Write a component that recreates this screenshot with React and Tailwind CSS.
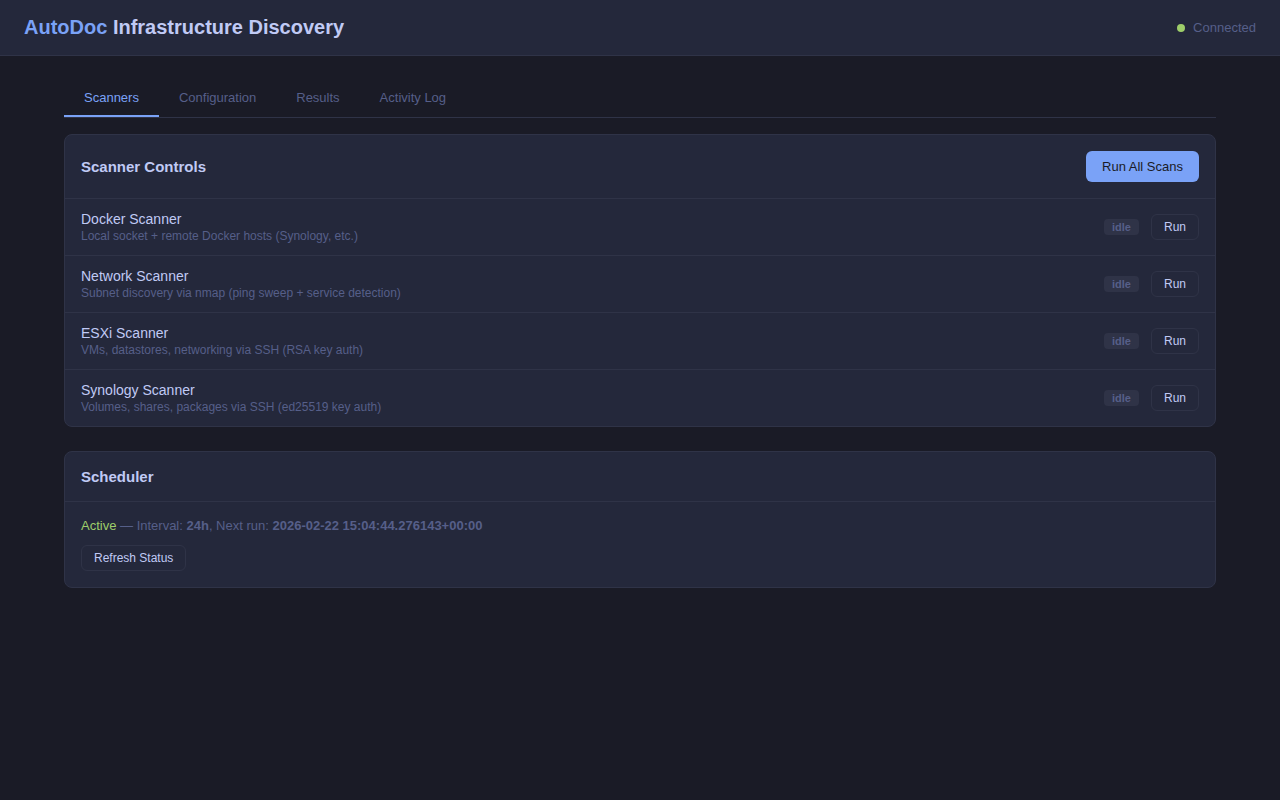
const scanners = [
  { name: 'Docker Scanner', desc: 'Local socket + remote Docker hosts (Synology, etc.)' },
  { name: 'Network Scanner', desc: 'Subnet discovery via nmap (ping sweep + service detection)' },
  { name: 'ESXi Scanner', desc: 'VMs, datastores, networking via SSH (RSA key auth)' },
  { name: 'Synology Scanner', desc: 'Volumes, shares, packages via SSH (ed25519 key auth)' },
];

const tabs = ['Scanners', 'Configuration', 'Results', 'Activity Log'];

export default function App() {
  return (
    <div className="min-h-[800px] bg-[#1a1b26] text-[#c0caf5] font-['Liberation_Sans',sans-serif] antialiased">
      <header className="h-[56px] flex items-center justify-between px-6 bg-[#24283b] border-b border-[#2f3347]">
        <h1 className="text-xl font-semibold leading-[23px]">
          <span className="text-[#7aa2f7]">AutoDoc</span> Infrastructure Discovery
        </h1>
        <div className="flex items-center gap-2 text-[13px] text-[#565f89]">
          <span className="w-2 h-2 rounded-full bg-[#9ece6a]" />
          Connected
        </div>
      </header>

      <main className="px-16 pt-6">
        <div className="flex border-b border-[#2f3347] mb-4">
          {tabs.map((tab, i) => (
            <div
              key={tab}
              className={`px-5 pt-[10px] pb-[10px] h-[37px] text-[13px] leading-[15px] border-b-2 ${i === 0 ? 'text-[#7aa2f7] border-[#7aa2f7]' : 'text-[#565f89] border-transparent'}`}
            >
              {tab}
            </div>
          ))}
        </div>

        <section className="bg-[#24283b] border border-[#2f3347] rounded-lg mb-6">
          <div className="flex items-center justify-between p-4 border-b border-[#2f3347]">
            <h2 className="text-[15px] font-semibold leading-[17px]">Scanner Controls</h2>
            <button className="h-[31px] px-4 rounded-md bg-[#7aa2f7] text-[#1a1b26] text-[13px]">Run All Scans</button>
          </div>
          {scanners.map((s, i) => (
            <div key={s.name} className={`flex items-center justify-between px-4 ${i < scanners.length - 1 ? 'h-[57px] border-b border-[#2f3347]' : 'h-[56px]'}`}>
              <div>
                <div className="text-sm leading-4">{s.name}</div>
                <div className="text-xs leading-[14px] mt-[2px] text-[#565f89]">{s.desc}</div>
              </div>
              <div className="flex items-center gap-3">
                <span className="px-2 py-px rounded bg-[#2f3347] text-[#565f89] text-[11px] leading-[14px] font-semibold">idle</span>
                <button className="h-[26px] px-3 rounded-md border border-[#2f3347] text-xs">Run</button>
              </div>
            </div>
          ))}
        </section>

        <section className="bg-[#24283b] border border-[#2f3347] rounded-lg">
          <div className="p-4 border-b border-[#2f3347]">
            <h2 className="text-[15px] font-semibold leading-[17px]">Scheduler</h2>
          </div>
          <div className="p-4">
            <p className="text-[13px] leading-[15px] text-[#565f89]">
              <span className="text-[#9ece6a]">Active</span> — Interval: <strong>24h</strong>, Next run: <strong>2026-02-22 15:04:44.276143+00:00</strong>
            </p>
            <button className="mt-3 block h-[26px] px-3 rounded-md border border-[#2f3347] text-xs">Refresh Status</button>
          </div>
        </section>
      </main>
    </div>
  );
}
